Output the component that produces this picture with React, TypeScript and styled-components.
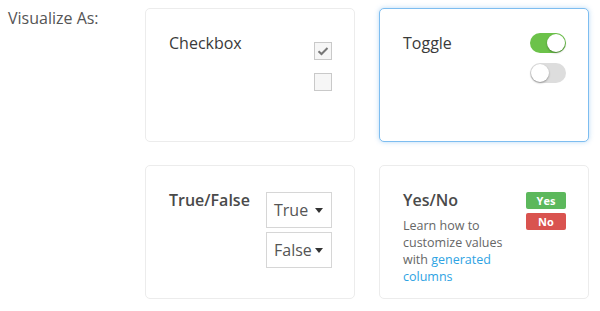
import React from "react";
import styled, { createGlobalStyle } from "styled-components";

const Global = createGlobalStyle`
  html, body { margin: 0; padding: 0; background: #fff; }
  body { font-family: "Open Sans", "Noto Sans", sans-serif; color: #444; }
`;

const Page = styled.div`
  display: grid;
  grid-template-columns: 113px 444px;
  column-gap: 24px;
  padding: 8px 0 0 8px;
  width: 600px;
  height: 311px;
  box-sizing: border-box;
`;

const Label = styled.div`
  font-size: 16px;
  line-height: 20px;
  color: #555;
`;

const Grid = styled.div`
  display: grid;
  grid-template-columns: 210px 210px;
  grid-auto-rows: 134px;
  column-gap: 24px;
  row-gap: 23px;
`;

const Card = styled.div<{ $active?: boolean }>`
  box-sizing: border-box;
  border-radius: 5px;
  border: 1px solid ${(p) => (p.$active ? "#7dbdf0" : "#ececec")};
  box-shadow: ${(p) => (p.$active ? "0 0 5px rgba(100,170,230,0.45)" : "none")};
  background: #fff;
  display: flex;
  justify-content: space-between;
  align-items: flex-start;
  padding: 23px 22px 0 23px;
`;

const Title = styled.div<{ $bold?: boolean }>`
  font-size: 16px;
  line-height: 20px;
  font-weight: ${(p) => (p.$bold ? 600 : 400)};
  color: ${(p) => (p.$bold ? "#4a4a4a" : "#3a3a3a")};
  margin-top: 1px;
`;

const Stack = styled.div<{ $gap: number }>`
  display: flex;
  flex-direction: column;
  gap: ${(p) => p.$gap}px;
`;

const Check = styled.div`
  width: 18px;
  height: 18px;
  box-sizing: border-box;
  border: 1px solid #c9c9c9;
  background: #f6f6f6;
  display: flex;
  align-items: center;
  justify-content: center;
`;

const Switch = styled.div<{ $on?: boolean }>`
  width: 36px;
  height: 20px;
  border-radius: 10px;
  background: ${(p) => (p.$on ? "#6cc24a" : "#dddddd")};
  position: relative;
  &::after {
    content: "";
    position: absolute;
    top: 1px;
    left: ${(p) => (p.$on ? "17px" : "1px")};
    width: 18px;
    height: 18px;
    border-radius: 50%;
    background: #fff;
    box-shadow: 0 1px 2px rgba(0,0,0,0.35);
  }
`;

const Select = styled.div`
  width: 66px;
  height: 36px;
  box-sizing: border-box;
  border: 1px solid #d6d6d6;
  display: flex;
  align-items: center;
  justify-content: space-between;
  padding: 0 8px 0 7px;
  font-size: 16px;
  color: #555;
`;

const Caret = styled.span`
  width: 0;
  height: 0;
  border-left: 4.5px solid transparent;
  border-right: 4.5px solid transparent;
  border-top: 5px solid #333;
`;

const Left = styled.div`
  display: flex;
  flex-direction: column;
`;

const Desc = styled.div`
  margin-top: 7px;
  font-size: 12.5px;
  line-height: 17px;
  color: #666;
  width: 110px;
`;

const Link = styled.a`
  color: #2ea3e3;
  text-decoration: none;
`;

const Badge = styled.div<{ $color: string }>`
  width: 40px;
  height: 17px;
  border-radius: 2px;
  background: ${(p) => p.$color};
  color: #fff;
  font-size: 11px;
  font-weight: 700;
  line-height: 17px;
  text-align: center;
`;

export default function App() {
  return (
    <>
      <Global />
      <Page>
        <Label>Visualize As:</Label>
        <Grid>
          <Card>
            <Title>Checkbox</Title>
            <Stack $gap={13} style={{ marginTop: 10 }}>
              <Check>
                <svg width="12" height="10" viewBox="0 0 12 10">
                  <path d="M1.5 5.2 L4.5 8 L10.5 2" fill="none" stroke="#777" strokeWidth="2" />
                </svg>
              </Check>
              <Check />
            </Stack>
          </Card>
          <Card $active>
            <Title>Toggle</Title>
            <Stack $gap={10} style={{ marginTop: 1 }}>
              <Switch $on />
              <Switch />
            </Stack>
          </Card>
          <Card>
            <Title $bold>True/False</Title>
            <Stack $gap={4} style={{ marginTop: 3 }}>
              <Select>True<Caret /></Select>
              <Select>False<Caret /></Select>
            </Stack>
          </Card>
          <Card>
            <Left>
              <Title $bold>Yes/No</Title>
              <Desc>
                Learn how to customize values with <Link href="#">generated columns</Link>
              </Desc>
            </Left>
            <Stack $gap={4} style={{ marginTop: 3 }}>
              <Badge $color="#5cb85c">Yes</Badge>
              <Badge $color="#d9534f">No</Badge>
            </Stack>
          </Card>
        </Grid>
      </Page>
    </>
  );
}
